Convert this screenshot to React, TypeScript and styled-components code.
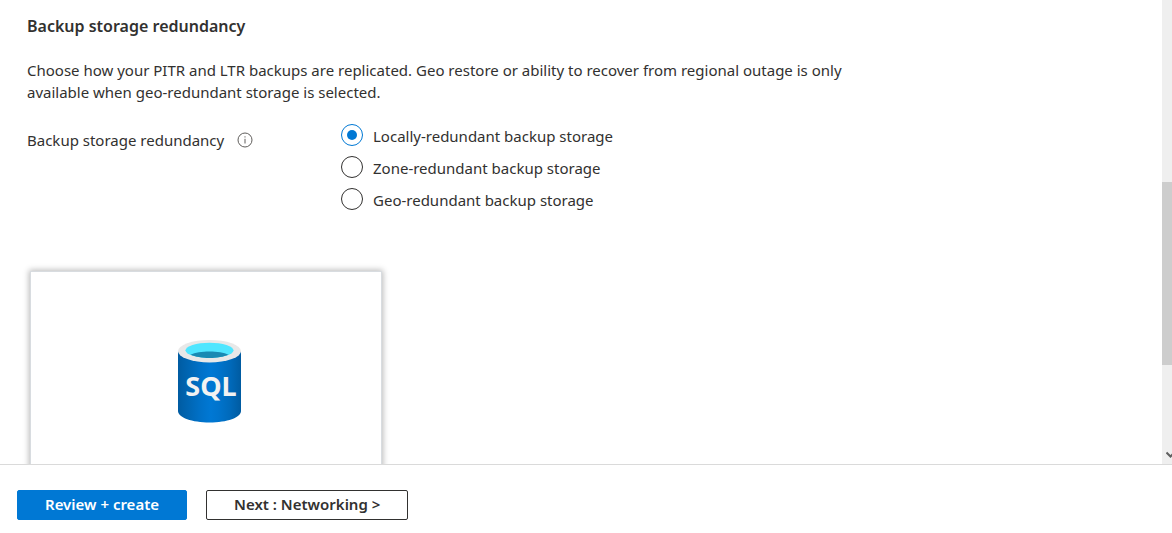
import React, { useState } from "react";
import styled, { createGlobalStyle } from "styled-components";

const GlobalStyle = createGlobalStyle`
  *, *::before, *::after { box-sizing: border-box; }
  body {
    margin: 0;
    background: #fff;
    color: #323130;
    font-family: "Segoe UI", "Noto Sans", sans-serif;
    font-size: 15px;
    line-height: 22px;
  }
`;

const Page = styled.div`
  display: flex;
  flex-direction: column;
  height: 100vh;
`;

const Viewport = styled.div`
  display: flex;
  flex: 1;
  min-height: 0;
  overflow: hidden;
`;

const Content = styled.main`
  flex: 1;
  min-width: 0;
  padding: 14px 27px 0;
`;

const Heading = styled.h2`
  margin: 0 0 21px;
  font-size: 16px;
  line-height: 24px;
  font-weight: 600;
`;

const Description = styled.p`
  max-width: 850px;
  margin: 0 0 17px;
`;

const Field = styled.fieldset`
  display: flex;
  align-items: flex-start;
  margin: 0;
  padding: 0;
  border: 0;
`;

const FieldLabel = styled.div`
  display: flex;
  align-items: center;
  gap: 13px;
  width: 314px;
  padding-top: 9px;
`;

const InfoButton = styled.button`
  display: flex;
  padding: 0;
  border: 0;
  background: none;
  color: #605e5c;
`;

const Options = styled.div`
  display: flex;
  flex-direction: column;
`;

const Option = styled.label`
  display: flex;
  align-items: center;
  gap: 10px;
  height: 32px;
`;

const Radio = styled.input`
  appearance: none;
  display: grid;
  place-items: center;
  width: 22px;
  height: 22px;
  margin: 0 0 2px;
  border: 1px solid #323130;
  border-radius: 50%;

  &:checked {
    border-color: #0078d4;
  }
  &:checked::before {
    content: "";
    width: 10px;
    height: 10px;
    border-radius: 50%;
    background: #0078d4;
  }
`;

const Card = styled.section`
  display: flex;
  justify-content: center;
  width: 352px;
  height: 300px;
  margin: 55px 0 0 3px;
  padding: 68px 0 0 6px;
  border: 1px solid #d8dce0;
  box-shadow: 0 0 6px 1px rgba(0, 0, 0, 0.28);
`;

const ScrollTrack = styled.div`
  display: flex;
  flex-direction: column;
  width: 10px;
  overflow: hidden;
  background: #efefef;
`;

const TrackSpace = styled.div<{ $grow: number }>`
  flex: ${(p) => p.$grow} 0 0;
`;

const Thumb = styled.div`
  flex: 183 0 0;
  background: #cdcdcd;
`;

const ScrollArrow = styled.svg`
  flex: none;
  margin: 0 0 5px 4px;
`;

const Footer = styled.footer`
  display: flex;
  gap: 19px;
  padding: 25px 17px 13px;
  border-top: 1px solid #dadada;
`;

const Button = styled.button<{ $primary?: boolean }>`
  height: 30px;
  padding: 0 27px 2px;
  border: 1px solid ${(p) => (p.$primary ? "#0078d4" : "#323130")};
  border-radius: 2px;
  background: ${(p) => (p.$primary ? "#0078d4" : "#fff")};
  color: ${(p) => (p.$primary ? "#fff" : "#323130")};
  font: inherit;
  font-weight: 600;
  line-height: 20px;
`;

function InfoIcon() {
  return (
    <svg width="16" height="16" viewBox="0 0 16 16" fill="none" stroke="currentColor" aria-hidden="true">
      <circle cx="8" cy="8" r="7" />
      <path d="M8 6.8v4.7M8 4.3v1.2" />
    </svg>
  );
}

function SqlIcon() {
  return (
    <svg width="63" height="83" viewBox="0 0 63 83" role="img" aria-label="SQL database">
      <defs>
        <linearGradient id="body" x1="0" x2="1">
          <stop offset="0" stopColor="#005ba1" />
          <stop offset="0.07" stopColor="#0060a9" />
          <stop offset="0.36" stopColor="#0071c8" />
          <stop offset="0.52" stopColor="#0078d4" />
          <stop offset="0.64" stopColor="#0074cd" />
          <stop offset="0.82" stopColor="#006abb" />
          <stop offset="1" stopColor="#005ba1" />
        </linearGradient>
      </defs>
      <path d="M0 11v60c0 6.500 14 11.500 31.500 11.500S63 77.500 63 71V11z" fill="url(#body)" />
      <ellipse cx="31.500" cy="11.200" rx="31.500" ry="11.200" fill="#e8e8e8" />
      <ellipse cx="31.500" cy="10.300" rx="24" ry="7.500" fill="#50e6ff" />
      <path d="M12.500 14.800C17 12.800 24 11.600 31.500 11.600s14.500 1.200 19 3.200c-4.500 2-11.500 3.200-19 3.200s-14.500-1.200-19-3.200z" fill="#198ab3" />
      <text x="33" y="56" textAnchor="middle" fill="#f2f2f2" fontFamily='"Segoe UI", "Noto Sans", sans-serif' fontSize="27" fontWeight="700">
        SQL
      </text>
    </svg>
  );
}

const options = [
  { value: "local", label: "Locally-redundant backup storage" },
  { value: "zone", label: "Zone-redundant backup storage" },
  { value: "geo", label: "Geo-redundant backup storage" },
];

export default function App() {
  const [selected, setSelected] = useState("local");

  return (
    <>
      <GlobalStyle />
      <Page>
        <Viewport>
          <Content>
            <Heading>Backup storage redundancy</Heading>
            <Description>
              Choose how your PITR and LTR backups are replicated. Geo restore or ability to recover from regional
              outage is only available when geo-redundant storage is selected.
            </Description>
            <Field aria-labelledby="redundancy-label">
              <FieldLabel>
                <span id="redundancy-label">Backup storage redundancy</span>
                <InfoButton type="button" aria-label="More information">
                  <InfoIcon />
                </InfoButton>
              </FieldLabel>
              <Options>
                {options.map((o) => (
                  <Option key={o.value}>
                    <Radio
                      type="radio"
                      name="redundancy"
                      value={o.value}
                      checked={selected === o.value}
                      onChange={() => setSelected(o.value)}
                    />
                    {o.label}
                  </Option>
                ))}
              </Options>
            </Field>
            <Card>
              <SqlIcon />
            </Card>
          </Content>
          <ScrollTrack aria-hidden="true">
            <TrackSpace $grow={182} />
            <Thumb />
            <TrackSpace $grow={86} />
            <ScrollArrow width="8" height="8" viewBox="0 0 8 8" fill="none" stroke="#606060" strokeWidth="2">
              <path d="M0.500 1.500l4 4 4-4" />
            </ScrollArrow>
          </ScrollTrack>
        </Viewport>
        <Footer>
          <Button type="button" $primary>
            Review + create
          </Button>
          <Button type="button">Next : Networking &gt;</Button>
        </Footer>
      </Page>
    </>
  );
}
